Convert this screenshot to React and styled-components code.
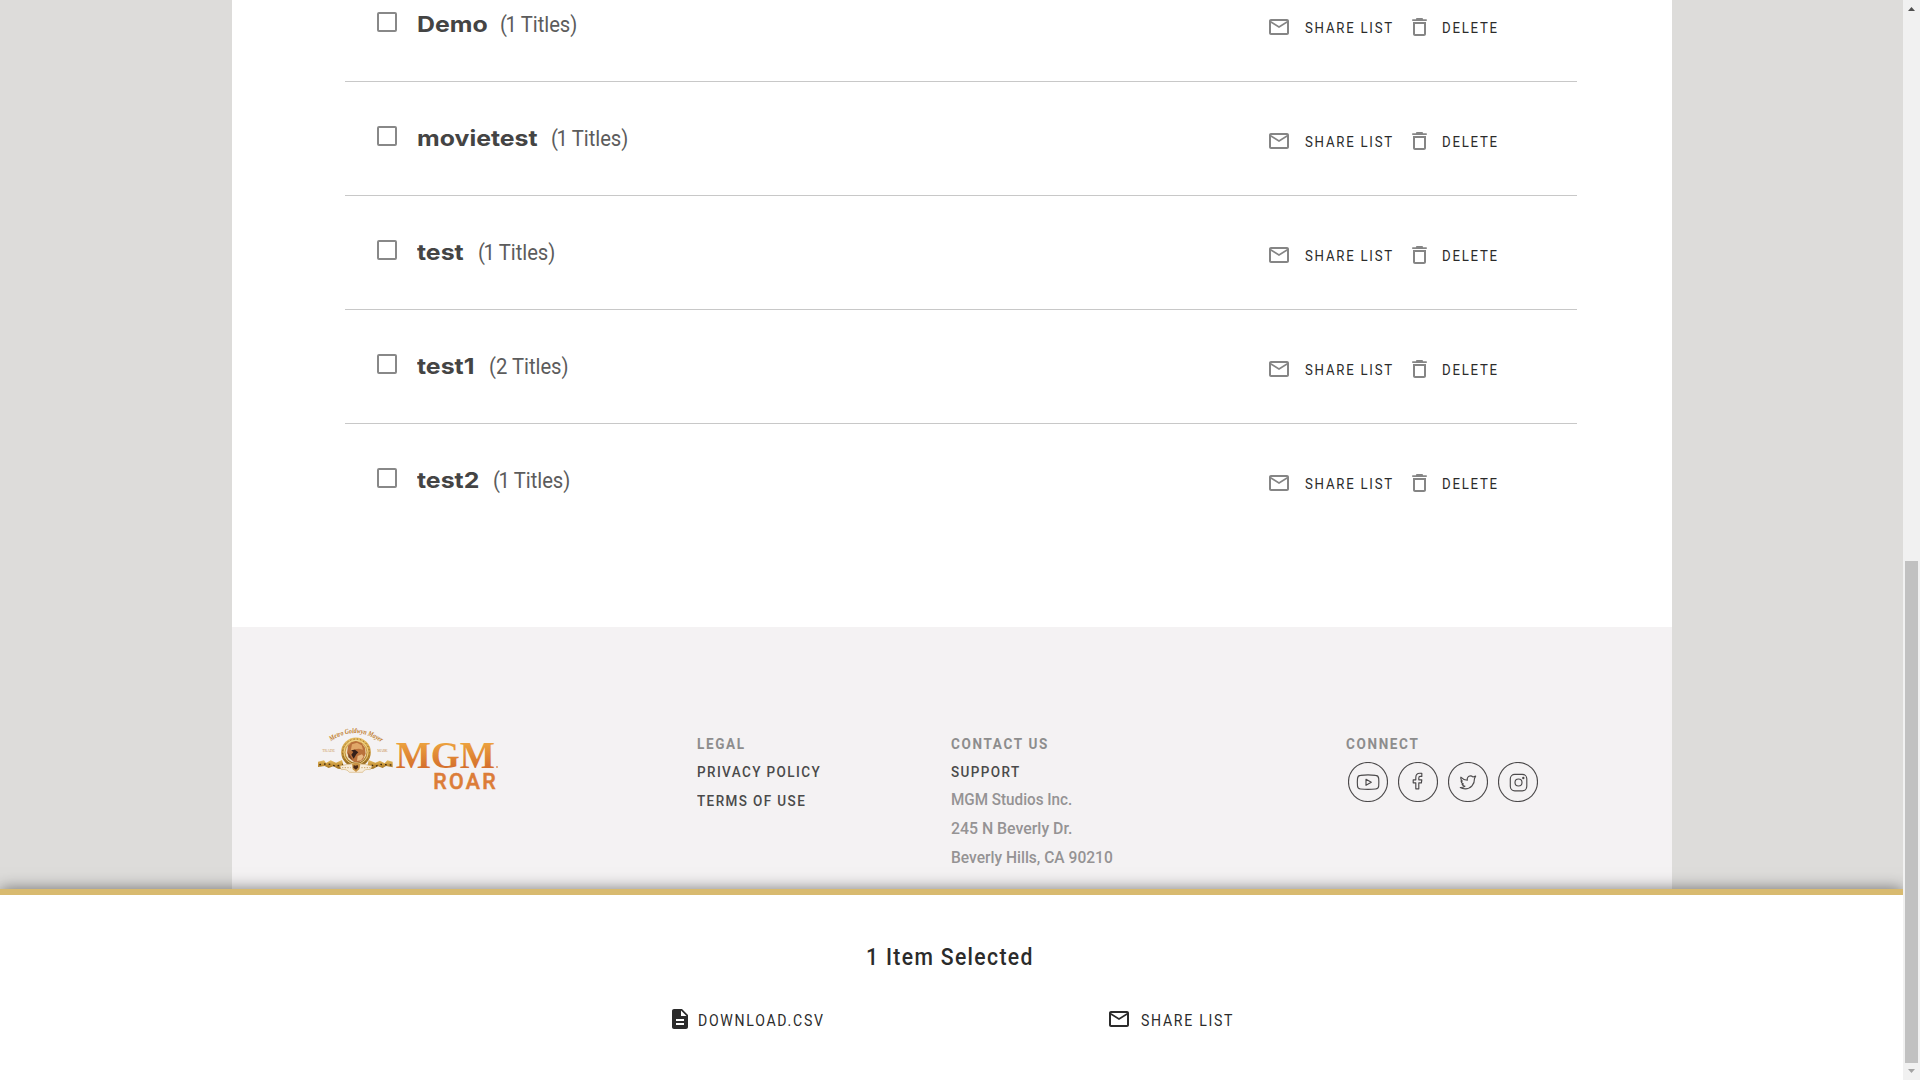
import React from 'react';
import styled, { createGlobalStyle, css } from 'styled-components';

const GlobalStyle = createGlobalStyle`
  *, *::before, *::after { box-sizing: border-box; }
  body { margin: 0; overflow: hidden; font-family: Roboto, "Liberation Sans", sans-serif; color: #2b2b2b; }
`;

const Screen = styled.div`
  display: flex;
  width: 1920px;
  height: 1080px;
  overflow: hidden;
`;

const Viewport = styled.div`
  display: flex;
  flex-direction: column;
  width: 1903px;
  overflow: hidden;
  background: #dddcda;
`;

const Page = styled.div`
  display: flex;
  flex-direction: column;
  width: 1440px;
  height: 889px;
  margin-left: 232px;
  background: #fff;
`;

const ListArea = styled.main`
  height: 627px;
  flex: none;
  padding: 0 95px 0 113px;
  overflow: hidden;
`;

const List = styled.ul`
  margin: -32px 0 0;
  padding: 0;
  list-style: none;
`;

const Row = styled.li`
  display: flex;
  justify-content: space-between;
  height: 114px;
  padding: 44px 0 0 32px;
  border-bottom: 1px solid #c8c8c8;
  &:last-child { border-bottom: 0; }
`;

const RowInfo = styled.div`
  display: flex;
`;

const Checkbox = styled.span`
  width: 20px;
  height: 20px;
  margin-right: 20px;
  border: 2px solid #888;
  border-radius: 2px;
`;

const Titles = styled.div`
  display: flex;
  align-items: baseline;
  height: 26px;
  white-space: nowrap;
`;

const stretch = css`
  display: inline-block;
  transform-origin: left center;
  white-space: nowrap;
`;

const Name = styled.span`
  ${stretch}
  width: ${({ $width }) => $width}px;
  font: 700 22px/24px Inter, "Liberation Sans", sans-serif;
  transform: scaleX(1.13);
  color: #444;
`;

const Count = styled.span`
  ${stretch}
  font-size: 21.5px;
  line-height: 23px;
  transform: scaleX(0.94);
  color: #5c5c5c;
`;

const Digit = styled.span`
  margin: ${({ $narrow }) => ($narrow ? '0 -1px 0 -1.4px' : '0')};
`;

const RowActions = styled.div`
  display: flex;
  align-items: flex-start;
  width: 310.5px;
  padding-top: 3px;
`;

const ActionLabel = styled.span`
  ${stretch}
  width: ${({ $width }) => $width}px;
  font-size: 15px;
  line-height: 26px;
  letter-spacing: 2px;
  transform: scaleX(0.88);
`;

const Icon = styled.svg`
  display: block;
  flex: none;
  width: ${({ $w }) => $w || 24}px;
  height: 24px;
  margin-right: ${({ $gap }) => $gap || 0}px;
`;

const Footer = styled.footer`
  display: flex;
  flex: 1;
  padding: 88px 0 0 78px;
  background: #f4f2f3;
`;

const Logo = styled.svg`
  flex: none;
  width: 200px;
  height: 90px;
`;

const Column = styled.section`
  flex: none;
  width: ${({ $width }) => $width}px;
  margin-left: ${({ $offset }) => $offset || 0}px;
  padding-top: 15px;
  display: flex;
  flex-direction: column;
  align-items: flex-start;
`;

const Heading = styled.h3`
  ${stretch}
  margin: 0;
  font-size: 15px;
  font-weight: 700;
  line-height: 28px;
  letter-spacing: 1.85px;
  transform: scaleX(0.9);
  color: #8d8d8d;
`;

const FooterLink = styled.a`
  ${stretch}
  font-size: 15px;
  font-weight: 500;
  line-height: ${({ $line }) => $line || 29}px;
  letter-spacing: 1.55px;
  transform: scaleX(0.9);
  color: #4a4a4a;
`;

const Address = styled.address`
  display: flex;
  flex-direction: column;
  align-items: flex-start;
  margin-top: -1px;
  font-style: normal;
`;

const AddressLine = styled.span`
  ${stretch}
  font-size: 16px;
  font-weight: 500;
  line-height: 29px;
  transform: scaleX(${({ $scale }) => $scale});
  color: #959394;
`;

const Socials = styled.div`
  display: flex;
  gap: 10px;
  margin: 4px 0 0 2.300px;
`;

const Social = styled.svg`
  width: 40px;
  height: 40px;
  fill: none;
  stroke: #4c4a4b;
  stroke-width: 1.15;
  stroke-linejoin: round;
  stroke-linecap: round;
`;

const SelectionBar = styled.section`
  position: relative;
  height: 191px;
  padding-top: 48px;
  border-top: 6px solid #d8ba70;
  background: #fff;
  box-shadow: 0 0 15px rgba(0, 0, 0, 0.5);
`;

const SelectionTitle = styled.h2`
  ${stretch}
  display: block;
  width: 300px;
  margin: 0 0 36px 866px;
  font-size: 23.5px;
  font-weight: 500;
  line-height: 28px;
  letter-spacing: 1.5px;
  transform: scaleX(0.9);
`;

const SelectionActions = styled.div`
  display: flex;
  padding-left: 668px;
`;

const SelectionAction = styled.div`
  display: flex;
  width: 438.5px;
`;

const SelectionLabel = styled.span`
  ${stretch}
  font-size: 16px;
  line-height: 27px;
  letter-spacing: 1.950px;
  transform: scaleX(0.88);
`;

const Scrollbar = styled.div`
  display: flex;
  flex-direction: column;
  width: 17px;
  background: #f1f1f1;
`;

const ScrollButton = styled.svg`
  display: block;
  width: 17px;
  height: 17px;
  fill: ${({ $color }) => $color};
`;

const Track = styled.div`
  flex: 1;
  padding: 544px 2px 0;
`;

const Thumb = styled.div`
  height: 502px;
  background: #c1c1c1;
`;

const MailIcon = ({ color, gap }) => (
  <Icon viewBox="0 0 24 24" $gap={gap} fill={color}>
    <path d="M20 4H4c-1.1 0-2 .9-2 2v12c0 1.1.9 2 2 2h16c1.1 0 2-.9 2-2V6c0-1.1-.9-2-2-2zm0 14H4V8l8 5 8-5v10zm-8-7L4 6h16l-8 5z" />
  </Icon>
);

const TrashIcon = () => (
  <Icon viewBox="0 0 15 24" $w={15} $gap={14.5} fill="#858585">
    <path d="M4 4.2V4c0-.6.6-1 1.200-1h4.600C10.400 3 11 3.400 11 4v.2h3.200c.5 0 .8.300.8.900s-.3.900-.8.900H.8C.3 6 0 5.700 0 5.100s.3-.9.800-.9z" />
    <path fillRule="evenodd" d="M1 7h13v12c0 1.100-.9 2-2 2H3c-1.100 0-2-.9-2-2zm2 2v10h9V9z" />
  </Icon>
);

const FileIcon = () => (
  <Icon viewBox="0 0 24 24" $gap={6} fill="#2b2b2b">
    <path d="M14 2H6c-1.100 0-1.990.9-1.990 2L4 20c0 1.100.89 2 1.990 2H18c1.100 0 2-.9 2-2V8l-6-6zm2 16H8v-2h8v2zm0-4H8v-2h8v2zm-3-5V3.500L18.500 9H13z" />
  </Icon>
);

const BrandLogo = () => (
  <Logo viewBox="0 0 600 270">
    <defs>
      <linearGradient id="wordmark" x1="0" y1="0" x2="0" y2="1">
        <stop offset="0.2" stopColor="#eda43f" />
        <stop offset="0.8" stopColor="#d5702d" />
      </linearGradient>
      <linearGradient id="gold" x1="0" y1="0" x2="0" y2="1">
        <stop offset="0" stopColor="#e6bd62" />
        <stop offset="0.5" stopColor="#c8963a" />
        <stop offset="1" stopColor="#94691f" />
      </linearGradient>
      <path id="arch" d="M63 79 Q138 27 216 84" />
    </defs>
    <text fill="#c07c2a" fontFamily="Liberation Serif, serif" fontStyle="italic" fontWeight="700" fontSize="22">
      <textPath href="#arch" textLength="162" lengthAdjust="spacingAndGlyphs">Metro Goldwyn Mayer</textPath>
    </text>
    <g fill="#cf9c5a" fontFamily="Liberation Serif, serif" fontSize="12">
      <text x="37" y="112" textLength="38">TRADE</text>
      <text x="202" y="112" textLength="31">MARK</text>
    </g>
    <path fill="url(#gold)" d="M24 140l18-4 6 8 14-8 16 7 18-8 8 28-20-2-14-7-14 5-12-6-20 3zM248 140l-16-4-8 9-14-8-14 6-20-8-6 28 20-2 14-7 14 5 10-6 20 4z" />
    <g fill="none" stroke="#3f2c14" strokeWidth="4" strokeDasharray="5 9">
      <path d="M28 149l20-2 14 1 16 6 20-6M244 150l-20-1-14-1-14 6-20-6" />
    </g>
    <circle cx="138" cy="112" r="38" fill="#f0dfbc" stroke="url(#gold)" strokeWidth="13" />
    <circle cx="138" cy="112" r="40" fill="none" stroke="#8a6022" strokeWidth="3" strokeDasharray="3 7" />
    <circle cx="138" cy="112" r="36" fill="none" stroke="#f3dc9b" strokeWidth="2.5" />
    <path fill="#b9713b" d="M114 92l10-10 14-4 17 6 10 14 2 18-7 17-13 9-15-1-12-10-9-17z" />
    <path fill="#e0a768" d="M126 88l15-5 14 8 4 13-12-3-14 2-11 6z" />
    <path fill="#e8b983" d="M143 123l13-5 5 7-8 11-12 2z" />
    <path fill="#33201a" d="M123 106l12-2 10 8-6 6-8 13-7-12 6-8z" />
    <path fill="#7a4628" d="M115 113l7 11 6 12-13-9z" />
    <path fill="#f7ecd9" stroke="#d7b57a" strokeWidth="2" d="M90 153q48-14 96 0l-5 11q-19-3-23 8h-40q-7-11-24-8z" />
    <path fill="#c99344" d="M126 148l12-6 13 6-3 15-10 8-10-8z" />
    <path fill="#4a2815" d="M131 150l5 2 7-2 2 7-7 7-8-6z" />
    <path fill="none" stroke="#c9a36a" strokeWidth="3" strokeDasharray="4 4" d="M96 158h26M154 158h27" />
    <text x="257" y="158" textLength="298" lengthAdjust="spacingAndGlyphs" fill="url(#wordmark)" fontFamily="Liberation Serif, serif" fontWeight="700" fontSize="115">MGM</text>
    <circle cx="561" cy="156" r="3" fill="#df9560" />
    <text x="370" y="223" textLength="187" fill="#dc7d38" stroke="#dc7d38" strokeWidth="1.5" fontFamily="Roboto, sans-serif" fontWeight="500" fontSize="64">ROAR</text>
  </Logo>
);

const LISTS = [
  { name: 'Demo', count: 1, width: 83 },
  { name: 'movietest', count: 1, width: 134.2 },
  { name: 'test', count: 1, width: 61.2 },
  { name: 'test1', count: 2, width: 71.5 },
  { name: 'test2', count: 1, width: 76 },
];

const ListRow = ({ name, count, width }) => (
  <Row>
    <RowInfo>
      <Checkbox />
      <Titles>
        <Name $width={width}>{name}</Name>
        <Count>(<Digit $narrow={count === 1}>{count}</Digit> Titles)</Count>
      </Titles>
    </RowInfo>
    <RowActions>
      <MailIcon color="#858585" gap={14.5} />
      <ActionLabel $width={107}>SHARE LIST</ActionLabel>
      <TrashIcon />
      <ActionLabel>DELETE</ActionLabel>
    </RowActions>
  </Row>
);

export default function App() {
  return (
    <Screen>
      <GlobalStyle />
      <Viewport>
        <Page>
          <ListArea>
            <List>
              {LISTS.map((item) => <ListRow key={item.name} {...item} />)}
            </List>
          </ListArea>
          <Footer>
            <BrandLogo />
            <Column $width={253.5} $offset={187.3}>
              <Heading>LEGAL</Heading>
              <FooterLink>PRIVACY POLICY</FooterLink>
              <FooterLink>TERMS OF USE</FooterLink>
            </Column>
            <Column $width={395}>
              <Heading>CONTACT US</Heading>
              <FooterLink $line={28}>SUPPORT</FooterLink>
              <Address>
                <AddressLine $scale={0.952}>MGM Studios Inc.</AddressLine>
                <AddressLine $scale={0.99}>245 N Beverly Dr.</AddressLine>
                <AddressLine $scale={0.972}>Beverly Hills, CA 90210</AddressLine>
              </Address>
            </Column>
            <Column $width={200}>
              <Heading>CONNECT</Heading>
              <Socials>
                <Social viewBox="0 0 40 40">
                  <circle cx="20" cy="20" r="19.500" />
                  <path d="M12.500 13.400q7.500-.9 15 0 3 .2 3.200 3.200.3 3.700 0 7.400-.2 2.800-3.200 3-7.500.8-15 0-2.800-.2-3-3-.4-3.700 0-7.400.2-3 3-3.200z" />
                  <path d="M18 17.300v6l5.300-3z" />
                </Social>
                <Social viewBox="0 0 40 40">
                  <circle cx="20" cy="20" r="19.500" />
                  <path d="M23.800 11.300v3.100h-1.700c-1 0-1.300.6-1.300 1.500v1.900h3l-.4 3h-2.600v6h-3v-6h-2.600v-3h2.600v-2.300c0-2.700 1.500-4.200 4-4.200z" />
                </Social>
                <Social viewBox="0 0 40 40">
                  <circle cx="20" cy="20" r="19.500" />
                  <path d="M12.800 15.200c1.700 1.900 4 2.900 6.500 3-.5-2.200.9-4.300 3.100-4.300 1.100 0 1.900.4 2.500 1.100l2.800-.9-1.200 2.500c.2 5.800-3.800 10.300-9.300 10.300-1.800 0-3.500-.5-4.900-1.400 1.700.1 3.300-.3 4.600-1.300-1.500-.2-2.500-1-2.900-2.200h1.400c-1.500-.6-2.400-1.700-2.400-3.200l1.300.4c-1.400-1.100-1.900-2.600-1.500-4z" />
                </Social>
                <Social viewBox="0 0 40 40">
                  <circle cx="20" cy="20" r="19.500" />
                  <rect x="12.300" y="12.300" width="16.500" height="16.500" rx="4.500" />
                  <circle cx="20.500" cy="20.500" r="3.500" />
                  <circle cx="25.300" cy="16" r=".6" />
                </Social>
              </Socials>
            </Column>
          </Footer>
        </Page>
        <SelectionBar>
          <SelectionTitle>1 Item Selected</SelectionTitle>
          <SelectionActions>
            <SelectionAction>
              <FileIcon />
              <SelectionLabel>DOWNLOAD.CSV</SelectionLabel>
            </SelectionAction>
            <SelectionAction>
              <MailIcon color="#2b2b2b" gap={10.5} />
              <SelectionLabel>SHARE LIST</SelectionLabel>
            </SelectionAction>
          </SelectionActions>
        </SelectionBar>
      </Viewport>
      <Scrollbar>
        <ScrollButton viewBox="0 0 17 17" $color="#505050"><path d="M5 11l3.500-4 3.500 4z" /></ScrollButton>
        <Track><Thumb /></Track>
        <ScrollButton viewBox="0 0 17 17" $color="#a3a3a3"><path d="M5 6h7l-3.500 4z" /></ScrollButton>
      </Scrollbar>
    </Screen>
  );
}
